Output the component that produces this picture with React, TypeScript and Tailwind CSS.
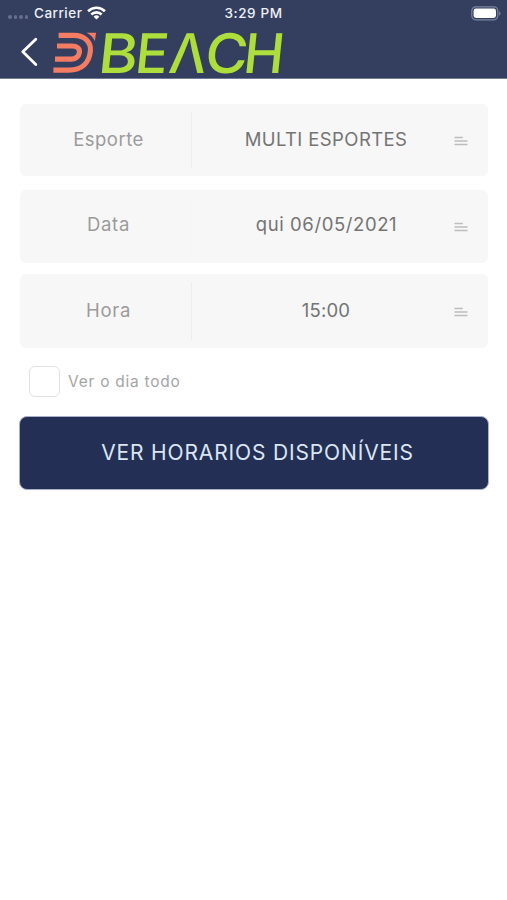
import React from "react";

interface Field {
  label: string;
  labelClass: string;
  value: string;
  valueClass: string;
  boxClass: string;
  dividerClass: string;
}

const fields: Field[] = [
  {
    label: "Esporte",
    labelClass: "pb-px tracking-[0.5px]",
    value: "MULTI ESPORTES",
    valueClass: "pb-px tracking-[0.4px]",
    boxClass: "h-[72px]",
    dividerClass: "border-[#ededed]",
  },
  {
    label: "Data",
    labelClass: "pb-[3px] tracking-[0.7px]",
    value: "qui 06/05/2021",
    valueClass: "pb-[3px] pl-px tracking-[0.6px]",
    boxClass: "h-[73px] mt-3.5",
    dividerClass: "border-[#f5f5f5]",
  },
  {
    label: "Hora",
    labelClass: "pb-px tracking-[0.7px]",
    value: "15:00",
    valueClass: "pb-px tracking-[0.2px]",
    boxClass: "h-[74px] mt-[11px]",
    dividerClass: "border-[#ededed]",
  },
];

function StatusBar() {
  return (
    <div className="grid h-[26px] grid-cols-3 items-center px-2 text-[13.5px] font-medium text-[#edf0f6]">
      <div className="flex items-center">
        <div className="mt-2 flex gap-[2px]">
          {[0, 1, 2, 3].map((i) => (
            <span key={i} className="h-[3.5px] w-[3.5px] rounded-full bg-[#66708e]" />
          ))}
        </div>
        <span className="ml-[6px] tracking-[0.5px]">Carrier</span>
        <svg className="ml-[5px] h-[14px] w-[19px]" viewBox="0 0 19 14" fill="none" stroke="#fff" strokeWidth="2.6">
          <path d="M1.1 5.2a12 12 0 0 1 16.8 0" />
          <path d="M4.3 8.5a7.4 7.4 0 0 1 10.4 0" />
          <path d="M9.5 13.6 6.6 10.7a4.2 4.2 0 0 1 5.8 0z" fill="#fff" stroke="none" />
        </svg>
      </div>
      <span className="text-center tracking-[0.6px]">3:29 PM</span>
      <svg className="-mr-[3px] h-[15px] w-[31px] justify-self-end" viewBox="0 0 31 15" fill="none">
        <rect x="0.8" y="0.8" width="26" height="13" rx="4" stroke="#7b849f" strokeWidth="1.2" />
        <rect x="2.6" y="2.6" width="22.4" height="9.4" rx="2.4" fill="#fff" />
        <path d="M28.2 5.3c1.7.6 1.7 3.8 0 4.4z" fill="#7b849f" />
      </svg>
    </div>
  );
}

const letters = [
  { char: "B", x: 97, stretch: 1.1 },
  { char: "E", x: 133.7, stretch: 1 },
  { char: "Λ", x: 167.5, stretch: 0.97 },
  { char: "C", x: 203.5, stretch: 1.07 },
  { char: "H", x: 242, stretch: 1 },
];

function Logo() {
  return (
    <svg
      className="ml-3.5 h-[46px] w-[236px] overflow-visible"
      viewBox="52 29 236 46"
      role="img"
      aria-label="BEACH"
    >
      <g fill="none" stroke="#f47c63" strokeWidth="5.1">
        <path d="M58.6 35.4H74C84.5 35.4 91.3 42 90.4 51C89.2 63 81.5 70.1 69 70.1H53.4" />
        <path d="M57 46H72C77 46 80 48.5 79.4 52.5C78.7 56.8 75.3 59.1 71 59.1H55" />
      </g>
      <path d="M86.5 32.8H96L94.9 41C92.8 37 90.2 34.5 86.5 32.8Z" fill="#f47c63" />
      {letters.map(({ char, x, stretch }) => (
        <text
          key={char}
          transform={`translate(${x} 72.7) skewX(-6) scale(${stretch} 1)`}
          fill="#aede3c"
          fontFamily="Inter, sans-serif"
          fontSize="54.5"
          fontWeight="500"
        >
          {char}
        </text>
      ))}
    </svg>
  );
}

function ListIcon() {
  return (
    <svg className="h-[10px] w-[14px]" viewBox="0 0 14 10" stroke="#bdbdbd" strokeWidth="1.7">
      <path d="M.5 1.5h8.4M.5 5h13M.5 8.5h13" />
    </svg>
  );
}

export default function App() {
  return (
    <div className="min-h-[900px] w-full bg-white font-['Inter',sans-serif]">
      <header className="h-[79px] border-b border-[#727c98] bg-[#343f60]">
        <StatusBar />
        <div className="flex h-[52px] items-center pl-5">
          <svg className="h-[30px] w-[18px]" viewBox="0 0 18 30" fill="none" stroke="#fff" strokeWidth="2.8">
            <path d="M15.8 2.3 2.8 14.8l13 12.7" strokeLinecap="round" strokeLinejoin="round" />
          </svg>
          <Logo />
        </div>
      </header>

      <main className="pt-[25px] pr-[19px] pl-5">
        {fields.map((field) => (
          <div key={field.label} className={`flex rounded-md bg-[#f7f7f7] py-2 ${field.boxClass}`}>
            <div
              className={`flex w-[172px] items-center justify-center border-r pl-1.5 text-[18.5px] text-[#9b9b9b] ${field.dividerClass} ${field.labelClass}`}
            >
              {field.label}
            </div>
            <div
              className={`flex w-[268px] items-center justify-center text-[18.5px] text-[#747474] ${field.valueClass}`}
            >
              {field.value}
            </div>
            <div className="-ml-[6px] flex items-center pt-px">
              <ListIcon />
            </div>
          </div>
        ))}

        <label className="mt-[18px] ml-[9px] flex items-center">
          <span className="h-[31px] w-[31px] rounded-md border-[1.5px] border-[#e2e2e2]" />
          <span className="ml-2 text-[15.5px] tracking-[0.75px] text-[#a5a5a5]">Ver o dia todo</span>
        </label>

        <button className="mt-[19px] -ml-px flex h-[74px] w-[470px] items-center justify-center rounded-lg border border-[#a9b0c7] bg-[#232f55] pl-[7px] text-[21px] tracking-[0.85px] text-[#dce6f2]">
          VER HORARIOS DISPONÍVEIS
        </button>
      </main>
    </div>
  );
}
